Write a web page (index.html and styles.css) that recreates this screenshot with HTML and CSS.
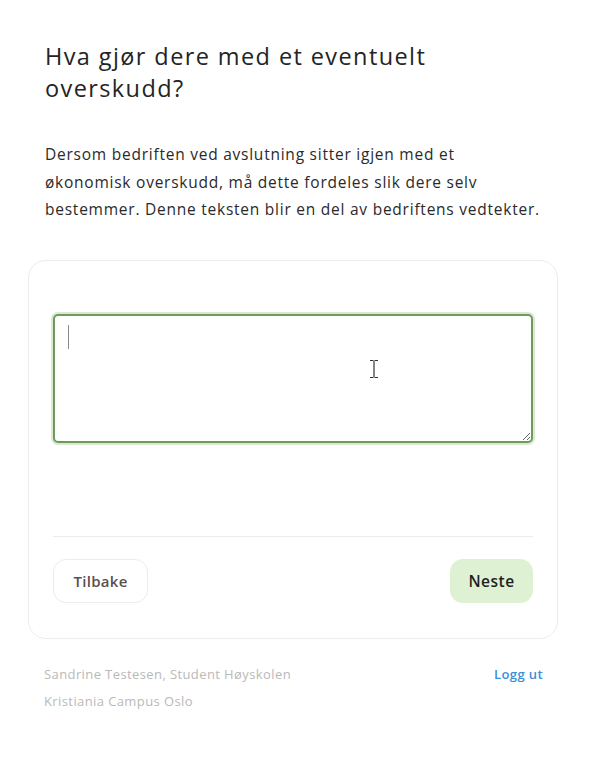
FILE: index.html
```html
<!DOCTYPE html>
<html lang="no">
<head>
<meta charset="utf-8">
<title>Overskudd</title>
<link rel="stylesheet" href="styles.css">
</head>
<body>
<main class="page">
  <h1 class="title">Hva gjør dere med et eventuelt overskudd?</h1>
  <p class="lead">Dersom bedriften ved avslutning sitter igjen med et<br>økonomisk overskudd, må dette fordeles slik dere selv<br>bestemmer. Denne teksten blir en del av bedriftens vedtekter.</p>
  <section class="card">
    <div class="field">
      <textarea class="input" aria-label="Svar"></textarea>
      <span class="caret"></span>
      <svg class="ibeam" width="10" height="20" viewBox="0 0 10 20"><path d="M1 1.5h3.5M5.5 1.5H9M5 2v16M1 18.5h3.5M5.5 18.5H9" stroke="#333" stroke-width="1.2" fill="none"/></svg>
    </div>
    <div class="actions">
      <button class="btn btn-back" type="button">Tilbake</button>
      <button class="btn btn-next" type="button">Neste</button>
    </div>
  </section>
  <footer class="footer">
    <div class="who">
      <div>Sandrine Testesen, Student Høyskolen</div>
      <div>Kristiania Campus Oslo</div>
    </div>
    <a class="logout" href="#">Logg ut</a>
  </footer>
</main>
</body>
</html>
```
FILE: styles.css
```css
html, body {
  margin: 0;
  padding: 0;
  background: #ffffff;
}
body {
  font-family: "Open Sans", "Noto Sans", Arial, sans-serif;
  color: #222222;
}
.page {
  width: 530px;
  padding: 40px 0 0 28px;
}
.title {
  margin: 0 0 0 17px;
  font-size: 23.5px;
  line-height: 32px;
  font-weight: 400;
  color: #242424;
  letter-spacing: 1.4px;
  width: 460px;
}
.lead {
  margin: 37px 0 0 17px;
  font-size: 15.5px;
  line-height: 27.5px;
  letter-spacing: 0.76px;
  color: #2a2a2a;
  white-space: nowrap;
}
.card {
  margin-top: 36px;
  box-sizing: border-box;
  width: 530px;
  height: 379px;
  border: 1px solid #ececec;
  border-radius: 18px;
  padding: 53px 24px 0 24px;
  display: flex;
  flex-direction: column;
}
.field {
  position: relative;
  height: 129px;
}
.input {
  box-sizing: border-box;
  width: 100%;
  height: 129px;
  border: 2px solid #6f9a5e;
  border-radius: 5px;
  box-shadow: 0 0 0 2px #dbe9d2;
  outline: none;
  resize: vertical;
  display: block;
  font: inherit;
}
.caret {
  position: absolute;
  left: 15px;
  top: 11px;
  width: 1px;
  height: 24px;
  background: #8a8a8a;
}
.ibeam {
  position: absolute;
  left: 316px;
  top: 45px;
}
.actions {
  margin-top: 93px;
  border-top: 1px solid #ececec;
  padding-top: 22px;
  display: flex;
  justify-content: space-between;
}
.btn {
  font-family: inherit;
  font-size: 15px;
  font-weight: 600;
  height: 44px;
  border-radius: 13px;
  cursor: pointer;
  padding: 0;
  letter-spacing: 0.3px;
}
.btn-back {
  width: 95px;
  background: #ffffff;
  border: 1px solid #ececec;
  color: #5a5050;
}
.btn-next {
  width: 83px;
  background: #dff1d3;
  border: none;
  color: #1f1f1f;
  font-size: 15.5px;
  letter-spacing: 0.5px;
}
.footer {
  margin: 22px 0 0 16px;
  width: 499px;
  display: flex;
  justify-content: space-between;
  align-items: flex-start;
  font-size: 13px;
  line-height: 27px;
  letter-spacing: 0.4px;
}
.who {
  color: #b9b9b9;
}
.logout {
  color: #3a8fd8;
  text-decoration: none;
  font-weight: 600;
}
```
